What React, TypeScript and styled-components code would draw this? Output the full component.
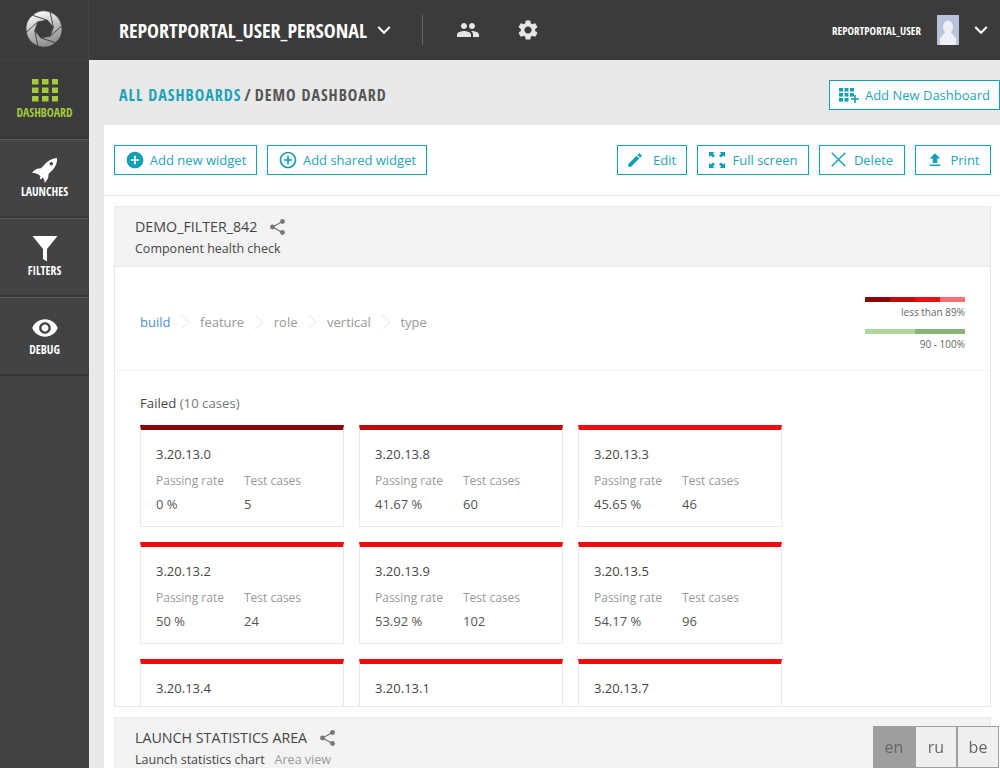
import React from "react";
import styled, { createGlobalStyle } from "styled-components";
import {
  MdAddCircle,
  MdAddCircleOutline,
  MdEdit,
  MdFileUpload,
  MdKeyboardArrowDown,
  MdPeople,
  MdRemoveRedEye,
  MdSettings,
} from "react-icons/md";

const TEAL = "#13a0b5";
const CONDENSED = `"Open Sans Condensed", "Open Sans", sans-serif`;

const GlobalStyle = createGlobalStyle`
  html, body {
    margin: 0;
    height: 100%;
    overflow: hidden;
    font-family: "Open Sans", sans-serif;
    color: #464547;
  }
  * { box-sizing: border-box; }
`;

const Page = styled.div`
  display: flex;
  width: 1000px;
  height: 768px;
  overflow: hidden;
  background: #e9e9e9;
`;

const Sidebar = styled.nav`
  width: 89px;
  flex: none;
  background: #434345;
  display: flex;
  flex-direction: column;
`;

const LogoCell = styled.div`
  height: 60px;
  background: #3b3b3b;
  border-right: 1px solid #444;
  border-bottom: 1px solid #444;
  display: flex;
  align-items: center;
  justify-content: center;
  padding-bottom: 2px;
`;

const NavItem = styled.a<{ $active?: boolean }>`
  height: 79px;
  display: flex;
  flex-direction: column;
  align-items: center;
  padding-top: 17px;
  background: ${(p) => (p.$active ? "#3b3b3b" : "#434345")};
  border-top: 1px solid ${(p) => (p.$active ? "#3b3b3b" : "#5a5a5c")};
  border-bottom: 2px solid #363636;
  color: ${(p) => (p.$active ? "#a4cb3c" : "#fff")};
  font-family: ${CONDENSED};
  font-weight: 700;
  font-size: 11.8px;
  line-height: 14px;
`;

const NavIcon = styled.span`
  height: 26px;
  margin-bottom: 1px;
  display: flex;
  align-items: center;
  justify-content: center;
`;

const Main = styled.main`
  flex: 1;
  min-width: 0;
  display: flex;
  flex-direction: column;
`;

const TopBar = styled.header`
  height: 60px;
  flex: none;
  background: #3b3b3b;
  color: #fff;
  display: flex;
  align-items: center;
  padding-left: 30px;
`;

const ProjectName = styled.span`
  font-family: ${CONDENSED};
  font-weight: 700;
  font-size: 20px;
  white-space: nowrap;
`;

const Chevron = styled(MdKeyboardArrowDown)`
  font-size: 26px;
  flex: none;
`;

const ProjectChevron = styled(Chevron)`
  margin-left: 4px;
`;

const Divider = styled.span`
  width: 1px;
  height: 30px;
  background: #666;
  margin: 0 33px 0 25px;
`;

const TopIcon = styled.span`
  width: 24px;
  height: 24px;
  font-size: 24px;
  color: #e6e6e6;
  display: flex;
  margin-right: 36px;
`;

const UserBlock = styled.div`
  margin-left: auto;
  display: flex;
  align-items: center;
  padding-right: 6px;
`;

const UserName = styled.span`
  font-family: ${CONDENSED};
  font-weight: 700;
  font-size: 11px;
  margin-right: 16px;
`;

const Avatar = styled.span`
  width: 22px;
  height: 30px;
  background: #b8c2dc;
  display: flex;
  overflow: hidden;
  margin-right: 9px;
`;

const Crumbs = styled.div`
  height: 65px;
  flex: none;
  display: flex;
  align-items: center;
  justify-content: space-between;
  padding: 5px 0 0 30px;
`;

const CrumbText = styled.div`
  font-family: ${CONDENSED};
  font-weight: 700;
  font-size: 16px;
  letter-spacing: 1px;
  color: #555;
  white-space: nowrap;
`;

const CrumbLink = styled.span`
  color: #1ba3b8;
`;

const CrumbSlash = styled.span`
  margin: 0 3px;
`;

const OutlineButton = styled.button<{ $w: number; $pr?: number }>`
  width: ${(p) => p.$w}px;
  height: 30px;
  flex: none;
  padding: 0 ${(p) => p.$pr ?? 0}px 0 0;
  display: flex;
  align-items: center;
  justify-content: center;
  gap: 6px;
  border: 1px solid ${TEAL};
  background: #fff;
  color: #25a5b8;
  font-family: "Open Sans", sans-serif;
  font-size: 13px;
  white-space: nowrap;
`;

const BtnIcon = styled.span<{ $size?: number; $gap?: number }>`
  display: flex;
  font-size: ${(p) => p.$size ?? 18}px;
  color: ${TEAL};
  margin-right: ${(p) => p.$gap ?? 2}px;
`;

const Panel = styled.section`
  flex: 1;
  min-height: 0;
  margin-left: 15px;
  background: #fff;
  display: flex;
  flex-direction: column;
`;

const Toolbar = styled.div`
  height: 71px;
  flex: none;
  display: flex;
  align-items: center;
  gap: 10px;
  padding: 0 9px 1px 10px;
  border-bottom: 1px solid #e9e9e9;
`;

const Spacer = styled.span`
  flex: 1;
`;

const Widgets = styled.div`
  padding: 10px 9px 0 10px;
  display: flex;
  flex-direction: column;
  gap: 10px;
`;

const Widget = styled.article<{ $h: number }>`
  height: ${(p) => p.$h}px;
  flex: none;
  border: 1px solid #e9e9e9;
  overflow: hidden;
`;

const WidgetHead = styled.div`
  height: 60px;
  background: #f3f3f3;
  border-bottom: 1px solid #e9e9e9;
  padding: 10px 20px 0;
`;

const WidgetTitle = styled.div`
  display: flex;
  align-items: center;
  font-size: 14.25px;
  line-height: 20px;
  color: #464547;
  gap: 13px;
`;

const ShareSvg = styled.svg`
  width: 15px;
  height: 16px;
  flex: none;
  display: block;
`;

const WidgetSub = styled.div`
  display: flex;
  gap: 10px;
  font-size: 12.5px;
  line-height: 20px;
  margin-top: 2px;
  color: #464547;
`;

const SubMuted = styled.span`
  color: #999;
`;

const DrillRow = styled.div`
  height: 104px;
  display: flex;
  align-items: center;
  justify-content: space-between;
  padding: 6px 25px 0;
  border-bottom: 1px solid #f5f5f5;
`;

const Steps = styled.div`
  display: flex;
  align-items: center;
  font-size: 13px;
`;

const Step = styled.span<{ $on?: boolean }>`
  color: ${(p) => (p.$on ? "#4a90d6" : "#999")};
`;

const StepSep = styled.svg`
  width: 10px;
  height: 16px;
  margin: 0 9.8px;
  display: block;
`;

const Legend = styled.div`
  width: 100px;
  display: flex;
  flex-direction: column;
  margin-top: 4px;
`;

const LegendBar = styled.div`
  display: flex;
  height: 5px;
`;

const LegendSeg = styled.span<{ $c: string }>`
  flex: 1;
  background: ${(p) => p.$c};
`;

const LegendText = styled.div`
  font-size: 10px;
  line-height: 14px;
  text-align: right;
  color: #666;
  margin: 3px 0 10px;
  white-space: nowrap;
  &:last-child { margin-bottom: 0; }
`;

const Failed = styled.div`
  padding: 23px 25px 0;
`;

const FailedTitle = styled.div`
  font-size: 13.2px;
  line-height: 18px;
  margin-bottom: 13px;
  color: #464547;
`;

const FailedCount = styled.span`
  color: #777;
`;

const CardGrid = styled.div`
  display: grid;
  grid-template-columns: repeat(3, 204px);
  column-gap: 15px;
  row-gap: 15px;
`;

const Card = styled.div<{ $c: string }>`
  height: 102px;
  border: 1px solid #e9e9e9;
  border-top: 5px solid ${(p) => p.$c};
  padding: 14px 15px 0;
`;

const CardVersion = styled.div`
  font-size: 13px;
  line-height: 20px;
  color: #464547;
  margin-bottom: 7px;
`;

const CardStats = styled.div`
  display: grid;
  grid-template-columns: 88px 1fr;
  font-size: 12px;
  line-height: 20px;
  color: #999;
`;

const CardValue = styled.span`
  font-size: 13px;
  line-height: 20px;
  color: #555;
  margin-top: 3px;
`;

const LangSwitch = styled.div`
  position: fixed;
  left: 873px;
  top: 726px;
  display: flex;
  height: 42px;
`;

const LangOption = styled.span<{ $on?: boolean }>`
  width: 42px;
  height: 42px;
  display: flex;
  align-items: center;
  justify-content: center;
  font-size: 16px;
  color: #666;
  background: ${(p) => (p.$on ? "#9e9e9e" : "rgba(238,238,238,.9)")};
  border: 1px solid #9e9e9e;
`;

const R = 18;
const HOLE = 9.5;
const polar = (r: number, deg: number) => {
  const t = (deg * Math.PI) / 180;
  return `${(r * Math.cos(t)).toFixed(2)} ${(r * Math.sin(t)).toFixed(2)}`;
};
const bladePath = (a: number) =>
  `M${polar(R, a)} A${R} ${R} 0 0 1 ${polar(R, a + 60)} L${polar(HOLE, a + 120)} L${polar(HOLE, a + 60)} Z`;

const Logo = () => (
  <svg width="38" height="38" viewBox="-19 -19 38 38">
    <defs>
      <linearGradient id="blade" gradientUnits="userSpaceOnUse" x1="-6" y1="-18" x2="6" y2="18">
        <stop offset="0" stopColor="#ffffff" />
        <stop offset="0.55" stopColor="#b4b4b4" />
        <stop offset="1" stopColor="#8a8a8a" />
      </linearGradient>
    </defs>
    {[0, 60, 120, 180, 240, 300].map((a) => (
      <path key={a} d={bladePath(a - 10)} fill="url(#blade)" stroke="#3b3b3b" strokeWidth="0.7" />
    ))}
  </svg>
);

const GridIcon = () => (
  <svg width="26" height="24" viewBox="0 0 26 24" fill="#a4cb3c">
    {[0, 1, 2].flatMap((r) =>
      [0, 1, 2].map((c) => <rect key={`${r}-${c}`} x={c * 10} y={r * 8.5} width="6.5" height="5.5" />)
    )}
  </svg>
);

const RocketIcon = () => (
  <svg width="25" height="25" viewBox="0 0 25 25">
    <path
      fill="#fff"
      d="M25 0C25.3 4 24 8 21 11.5L16.5 16C16.8 19 15.5 22.5 12.5 25C12.8 22.5 12 21 10.5 19.6L9 21.5L7.6 20.2L8.6 18.4L6.5 16.5C4.8 15.4 2.6 14.8 0 15C2.4 11.6 5.4 10.2 9 10.2L14 5C17 2 21 0.2 25 0Z"
    />
    <circle cx="19.3" cy="5.7" r="1.7" fill="#434345" />
  </svg>
);

const FunnelIcon = () => (
  <svg width="26" height="26" viewBox="0 0 26 26" fill="#fff">
    <path d="M0.5 0H25.5L15 13V25.5L11 23V13Z" />
  </svg>
);

const AddDashIcon = () => (
  <svg width="20" height="15" viewBox="0 0 20 15" fill={TEAL}>
    {[0, 1, 2].flatMap((r) =>
      [0, 1, 2]
        .filter((c) => !(r === 2 && c === 2))
        .map((c) => <rect key={`${r}-${c}`} x={c * 5.5} y={r * 5} width="4" height="3.6" />)
    )}
    <path d="M15.2 7H16.8V10.2H20V11.8H16.8V15H15.2V11.8H12V10.2H15.2Z" />
  </svg>
);

const FullScreenIcon = () => (
  <svg width="16" height="16" viewBox="0 0 16 16" fill={TEAL}>
    <path d="M0 0H5.5L3.9 1.6 6 3.7 4 5.6 1.8 3.5 0 5.3Z" />
    <path d="M16 0H10.5L12.1 1.6 10 3.7 12 5.6 14.2 3.5 16 5.3Z" />
    <path d="M0 16H5.5L3.9 14.4 6 12.3 4 10.4 1.8 12.5 0 10.7Z" />
    <path d="M16 16H10.5L12.1 14.4 10 12.3 12 10.4 14.2 12.5 16 10.7Z" />
  </svg>
);

const CrossIcon = () => (
  <svg width="15" height="15" viewBox="0 0 15 15">
    <path d="M0.7 0.7L14.3 14.3M14.3 0.7L0.7 14.3" fill="none" stroke={TEAL} strokeWidth="1.4" />
  </svg>
);

const AvatarFigure = () => (
  <svg width="22" height="30" viewBox="0 0 22 30" fill="#eef0f6">
    <ellipse cx="11" cy="12" rx="5" ry="6.5" />
    <path d="M8.5 17 L3 23 V30 H19 V23 L13.5 17Z" />
  </svg>
);

const ShareIcon = () => (
  <ShareSvg viewBox="0 0 15 16">
    <path d="M12.5 2.5L2.5 8L12.5 13.5" fill="none" stroke="#777" strokeWidth="1.3" />
    <circle cx="12.5" cy="2.5" r="2.4" fill="#777" />
    <circle cx="2.5" cy="8" r="2.4" fill="#777" />
    <circle cx="12.5" cy="13.5" r="2.4" fill="#777" />
  </ShareSvg>
);

const Sep = () => (
  <StepSep viewBox="0 0 10 16">
    <path d="M1 1 L9 8 L1 15" fill="none" stroke="#e6e6e6" />
  </StepSep>
);

const DARK = "#8b0505";
const MID = "#bf0a0a";
const RED = "#ee0c0c";

const cases = [
  { version: "3.20.13.0", rate: "0 %", total: "5", color: DARK },
  { version: "3.20.13.8", rate: "41.67 %", total: "60", color: MID },
  { version: "3.20.13.3", rate: "45.65 %", total: "46", color: RED },
  { version: "3.20.13.2", rate: "50 %", total: "24", color: RED },
  { version: "3.20.13.9", rate: "53.92 %", total: "102", color: RED },
  { version: "3.20.13.5", rate: "54.17 %", total: "96", color: RED },
  { version: "3.20.13.4", rate: "", total: "", color: RED },
  { version: "3.20.13.1", rate: "", total: "", color: RED },
  { version: "3.20.13.7", rate: "", total: "", color: RED },
];

const steps = ["feature", "role", "vertical", "type"];

export default function App() {
  return (
    <Page>
      <GlobalStyle />
      <Sidebar>
        <LogoCell>
          <Logo />
        </LogoCell>
        <NavItem $active>
          <NavIcon>
            <GridIcon />
          </NavIcon>
          DASHBOARD
        </NavItem>
        <NavItem>
          <NavIcon>
            <RocketIcon />
          </NavIcon>
          LAUNCHES
        </NavItem>
        <NavItem>
          <NavIcon>
            <FunnelIcon />
          </NavIcon>
          FILTERS
        </NavItem>
        <NavItem>
          <NavIcon>
            <MdRemoveRedEye size={28} />
          </NavIcon>
          DEBUG
        </NavItem>
      </Sidebar>
      <Main>
        <TopBar>
          <ProjectName>REPORTPORTAL_USER_PERSONAL</ProjectName>
          <ProjectChevron />
          <Divider />
          <TopIcon>
            <MdPeople />
          </TopIcon>
          <TopIcon>
            <MdSettings />
          </TopIcon>
          <UserBlock>
            <UserName>REPORTPORTAL_USER</UserName>
            <Avatar>
              <AvatarFigure />
            </Avatar>
            <Chevron />
          </UserBlock>
        </TopBar>
        <Crumbs>
          <CrumbText>
            <CrumbLink>ALL DASHBOARDS</CrumbLink>
            <CrumbSlash>/</CrumbSlash>DEMO DASHBOARD
          </CrumbText>
          <OutlineButton $w={171}>
            <BtnIcon $gap={0}>
              <AddDashIcon />
            </BtnIcon>
            Add New Dashboard
          </OutlineButton>
        </Crumbs>
        <Panel>
          <Toolbar>
            <OutlineButton $w={143}>
              <BtnIcon $size={20} $gap={-1}>
                <MdAddCircle />
              </BtnIcon>
              Add new widget
            </OutlineButton>
            <OutlineButton $w={160}>
              <BtnIcon $size={20} $gap={-1}>
                <MdAddCircleOutline />
              </BtnIcon>
              Add shared widget
            </OutlineButton>
            <Spacer />
            <OutlineButton $w={70} $pr={2}>
              <BtnIcon $gap={3}>
                <MdEdit />
              </BtnIcon>
              Edit
            </OutlineButton>
            <OutlineButton $w={112}>
              <BtnIcon>
                <FullScreenIcon />
              </BtnIcon>
              Full screen
            </OutlineButton>
            <OutlineButton $w={86}>
              <BtnIcon>
                <CrossIcon />
              </BtnIcon>
              Delete
            </OutlineButton>
            <OutlineButton $w={76}>
              <BtnIcon $gap={0}>
                <MdFileUpload />
              </BtnIcon>
              Print
            </OutlineButton>
          </Toolbar>
          <Widgets>
            <Widget $h={501}>
              <WidgetHead>
                <WidgetTitle>
                  DEMO_FILTER_842
                  <ShareIcon />
                </WidgetTitle>
                <WidgetSub>Component health check</WidgetSub>
              </WidgetHead>
              <DrillRow>
                <Steps>
                  <Step $on>build</Step>
                  {steps.map((s) => (
                    <React.Fragment key={s}>
                      <Sep />
                      <Step>{s}</Step>
                    </React.Fragment>
                  ))}
                </Steps>
                <Legend>
                  <LegendBar>
                    {["#8b0505", "#c20b0b", "#f00d0d", "#fb7272"].map((c) => (
                      <LegendSeg key={c} $c={c} />
                    ))}
                  </LegendBar>
                  <LegendText>less than 89%</LegendText>
                  <LegendBar>
                    {["#aed69f", "#86b47a"].map((c) => (
                      <LegendSeg key={c} $c={c} />
                    ))}
                  </LegendBar>
                  <LegendText>90 - 100%</LegendText>
                </Legend>
              </DrillRow>
              <Failed>
                <FailedTitle>
                  Failed <FailedCount>(10 cases)</FailedCount>
                </FailedTitle>
                <CardGrid>
                  {cases.map((c) => (
                    <Card key={c.version} $c={c.color}>
                      <CardVersion>{c.version}</CardVersion>
                      {c.rate && (
                        <CardStats>
                          <span>Passing rate</span>
                          <span>Test cases</span>
                          <CardValue>{c.rate}</CardValue>
                          <CardValue>{c.total}</CardValue>
                        </CardStats>
                      )}
                    </Card>
                  ))}
                </CardGrid>
              </Failed>
            </Widget>
            <Widget $h={60}>
              <WidgetHead>
                <WidgetTitle>
                  LAUNCH STATISTICS AREA
                  <ShareIcon />
                </WidgetTitle>
                <WidgetSub>
                  Launch statistics chart
                  <SubMuted>Area view</SubMuted>
                </WidgetSub>
              </WidgetHead>
            </Widget>
          </Widgets>
        </Panel>
      </Main>
      <LangSwitch>
        <LangOption $on>en</LangOption>
        <LangOption>ru</LangOption>
        <LangOption>be</LangOption>
      </LangSwitch>
    </Page>
  );
}
